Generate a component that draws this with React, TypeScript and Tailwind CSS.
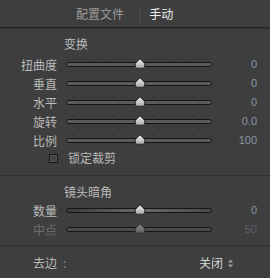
import React from "react";

const ticks = Array.from({ length: 11 });

function Thumb({ disabled }: { disabled?: boolean }) {
  const id = disabled ? "thumbOff" : "thumbOn";
  return (
    <svg width="12" height="11" viewBox="0 0 12 11" className="block">
      <defs>
        <linearGradient id={id} x1="0" y1="0" x2="0" y2="1">
          <stop offset="0" stopColor={disabled ? "#8a8a8a" : "#f2f2f2"} />
          <stop offset="1" stopColor={disabled ? "#5e5e5e" : "#a8a8a8"} />
        </linearGradient>
      </defs>
      <path
        d="M6 0.8 L10.6 5.4 L10.6 8.6 Q10.6 10.2 9 10.2 L3 10.2 Q1.4 10.2 1.4 8.6 L1.4 5.4 Z"
        fill={`url(#${id})`}
        stroke={disabled ? "#2a2a2a" : "#1e1e1e"}
        strokeWidth="0.8"
      />
    </svg>
  );
}

function Slider({ label, value, disabled, tinted }: { label: string; value: string; disabled?: boolean; tinted?: boolean }) {
  return (
    <div className="flex h-[19px] items-center">
      <div className={`w-[57px] text-right text-[12px] leading-none ${disabled ? "text-[#6e6e6e]" : "text-[#b9b9b9]"}`}>{label}</div>
      <div className="relative ml-[9px] w-[146px] h-[19px]">
        <div className="absolute left-0 right-0 top-[3px] flex justify-between px-[6px]">
          {ticks.map((_, i) => (
            <div key={i} className="w-px h-[2px] bg-[#2c2c2c]" />
          ))}
        </div>
        <div
          className={`absolute left-0 right-0 top-[7px] h-[5px] rounded-full border border-[#151515] ${
            tinted ? "bg-gradient-to-r from-[#3a3a3a] via-[#6a6a6a] to-[#4a4a4a]" : disabled ? "bg-[#4a4a4a]" : "bg-[#5a5a5a]"
          }`}
        />
        <div className="absolute left-[68px] top-[3px]">
          <Thumb disabled={disabled} />
        </div>
      </div>
      <div
        className={`flex-1 pr-[13px] text-right text-[11px] leading-none ${disabled ? "text-[#5d6166]" : "text-[#8a96a3]"}`}
        style={{ fontFamily: '"Liberation Sans", Arial, sans-serif' }}
      >
        {value}
      </div>
    </div>
  );
}

function Divider() {
  return <div className="h-px bg-[#2f2f2f]" />;
}

export default function App() {
  return (
    <div
      className="w-[270px] h-[278px] overflow-hidden bg-[#3e3e3e]"
      style={{ fontFamily: '"Noto Sans CJK SC", "Noto Sans", sans-serif' }}
    >
      {/* tabs */}
      <div className="flex h-[27px] items-center pl-[76px] text-[12px] leading-none">
        <span className="text-[#9c9c9c]">配置文件</span>
        <span className="ml-[14px] text-[#595959]">|</span>
        <span className="ml-[8px] text-[#ededed]">手动</span>
      </div>
      <div className="h-[2px] border-t border-[#242424] bg-[#313131]" />

      {/* 变换 */}
      <div className="pt-[7px]">
        <div className="h-[16px] pl-[64px] text-[12px] leading-[16px] text-[#bcbcbc]">变换</div>
        <div className="pt-[3px]">
          <Slider label="扭曲度" value="0" />
          <Slider label="垂直" value="0" />
          <Slider label="水平" value="0" />
          <Slider label="旋转" value="0.0" />
          <Slider label="比例" value="100" />
        </div>
        <div className="flex h-[16px] items-center pl-[49px]">
          <div className="w-[9px] h-[9px] border border-[#181818] bg-[#444] shadow-[inset_0_0_0_1px_#555]" />
          <span className="ml-[10px] text-[12px] leading-none text-[#b9b9b9]">锁定裁剪</span>
        </div>
      </div>

      <div className="mt-[9px]">
        <Divider />
      </div>

      {/* 镜头暗角 */}
      <div className="pt-[8px]">
        <div className="h-[16px] pl-[64px] text-[12px] leading-[16px] text-[#bcbcbc]">镜头暗角</div>
        <div className="pt-px">
          <Slider label="数量" value="0" tinted />
          <Slider label="中点" value="50" disabled />
        </div>
      </div>

      <div className="mt-[6px]">
        <Divider />
      </div>

      {/* 去边 */}
      <div className="flex h-[16px] items-center mt-[9px] text-[12px] leading-none">
        <div className="w-[57px] text-right text-[#b9b9b9]">去边</div>
        <span className="ml-[6px] text-[#8a8a8a]">:</span>
        <span className="ml-auto text-[#d6d6d6]">关闭</span>
        <svg width="7" height="9" viewBox="0 0 7 9" className="ml-[4px] mr-[36px]">
          <path d="M3.5 0.5 L6.2 3.6 L0.8 3.6 Z" fill="#9a9a9a" />
          <path d="M3.5 8.5 L6.2 5.4 L0.8 5.4 Z" fill="#9a9a9a" />
        </svg>
      </div>
    </div>
  );
}
